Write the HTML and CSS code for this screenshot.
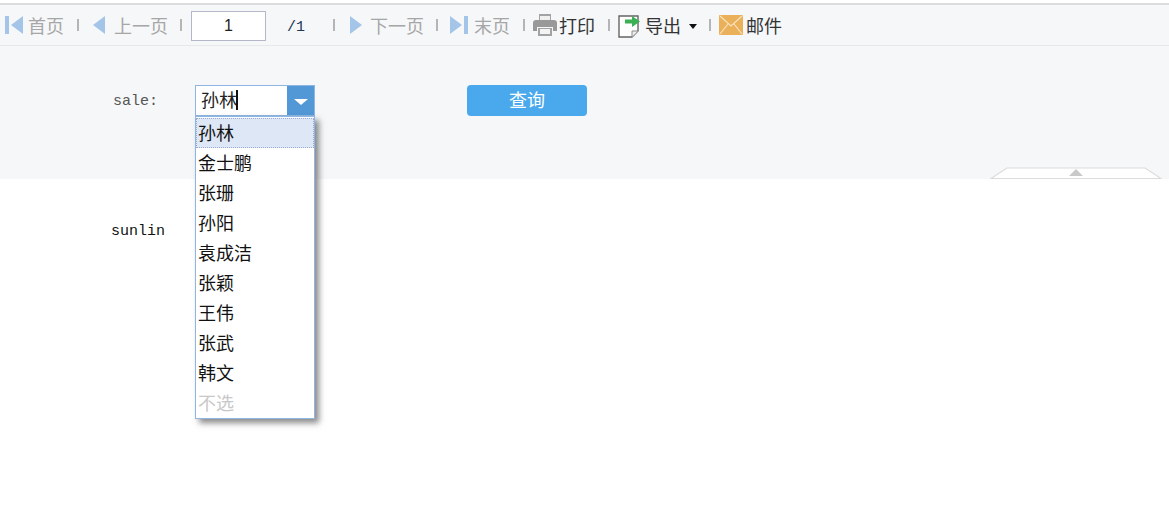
FILE: index.html
```html
<!DOCTYPE html>
<html lang="en">
<head>
  <meta charset="UTF-8">
  <title>Report</title>
  <link rel="stylesheet" href="styles.css">
</head>
<body>
  <div class="toolbar">
    <span class="tool first-page">
      <svg class="icon" width="18" height="20" viewBox="0 0 18 20"><rect x="0" y="1" width="4" height="18" fill="#a4c5e8"/><path d="M18 1V19L6 10Z" fill="#a4c5e8"/></svg>
      <span class="tool-text off">首页</span>
    </span>
    <i class="sep sep-first"></i>
    <span class="tool prev-page">
      <svg class="icon" width="12" height="18" viewBox="0 0 12 18"><path d="M12 0V18L0 9Z" fill="#a4c5e8"/></svg>
      <span class="tool-text off">上一页</span>
    </span>
    <i class="sep sep-prev"></i>
    <input class="page-input" type="text" value="1">
    <span class="page-total">/1</span>
    <i class="sep sep-total"></i>
    <span class="tool next-page">
      <svg class="icon" width="12" height="18" viewBox="0 0 12 18"><path d="M0 0V18L12 9Z" fill="#a4c5e8"/></svg>
      <span class="tool-text off">下一页</span>
    </span>
    <i class="sep sep-next"></i>
    <span class="tool last-page">
      <svg class="icon" width="18" height="20" viewBox="0 0 18 20"><path d="M0 1V19L12 10Z" fill="#a4c5e8"/><rect x="14" y="1" width="4" height="18" fill="#a4c5e8"/></svg>
      <span class="tool-text off">末页</span>
    </span>
    <i class="sep sep-last"></i>
    <span class="tool print">
      <svg class="icon" width="24" height="22" viewBox="0 0 24 22"><path d="M6 0H18V6H6Z" fill="#a3a3a3"/><path d="M3 6H21Q24 6 24 9V17H20V13H4V17H0V9Q0 6 3 6Z" fill="#999"/><path d="M5 14H19V22H5Z" fill="#a3a3a3"/><path d="M7 2H17V6H7Z" fill="#f0f0f0"/><path d="M7 15H17V20H7Z" fill="#f4f4f4"/></svg>
      <span class="tool-text">打印</span>
    </span>
    <i class="sep sep-print"></i>
    <span class="tool export">
      <svg class="icon" width="23" height="25" viewBox="0 0 23 25"><path d="M1 3H20V18L14 24H1Z" fill="#fff" stroke="#666" stroke-width="1.4"/><path d="M14 24V18H20" fill="#eee" stroke="#888"/><path d="M7 6.5H14V3L22 8.5L14 14V10.5H7Z" fill="#3cb054"/></svg>
      <span class="tool-text">导出</span>
      <i class="caret"></i>
    </span>
    <i class="sep sep-export"></i>
    <span class="tool mail">
      <svg class="icon" width="24" height="20" viewBox="0 0 24 20"><rect width="24" height="20" rx="1" fill="#eab05a"/><path d="M1 1L12 11L23 1M1 19L9 9M23 19L15 9" fill="none" stroke="#f8e3bd" stroke-width="1.2"/></svg>
      <span class="tool-text">邮件</span>
    </span>
  </div>

  <div class="form-panel">
    <span class="field-label">sale:</span>
    <div class="combo">
      <div class="combo-value">孙林<i class="text-cursor"></i></div>
      <div class="combo-btn"><i class="combo-arrow"></i></div>
      <ul class="combo-list">
        <li class="selected">孙林</li>
        <li>金士鹏</li>
        <li>张珊</li>
        <li>孙阳</li>
        <li>袁成洁</li>
        <li>张颖</li>
        <li>王伟</li>
        <li>张武</li>
        <li>韩文</li>
        <li class="none">不选</li>
      </ul>
    </div>
    <button class="query-btn">查询</button>
    <div class="collapse-handle">
      <svg width="172" height="12" viewBox="0 0 172 12"><path d="M1 11.5L17 1H155L171 11.5Z" fill="#fff" stroke="#dcdcdc" stroke-width="1.2"/><path d="M79 9L86 2L93 9Z" fill="#c9c9c9"/></svg>
    </div>
  </div>

  <div class="result">sunlin</div>
</body>
</html>
```

FILE: styles.css
```css
body {
  margin: 0;
  min-height: 100vh;
  background: white;
  font-family: "Noto Sans CJK SC", "Liberation Sans", sans-serif;
  color: #222;
}
.toolbar {
  display: flex;
  align-items: center;
  height: 40px;
  margin-top: 3px;
  border-top: 2px solid #dcdcdc;
  border-bottom: 1px solid #e6e8ea;
  background: #f6f7f9;
  padding-left: 5px;
  font-size: 18px;
}
.tool {
  display: flex;
  align-items: center;
}
.icon {
  flex: none;
}
.tool-text {
  line-height: 24px;
  color: #333;
}
.tool-text.off {
  color: #a6a6a6;
}
.sep {
  width: 2px;
  height: 12px;
  background: #b5b5b5;
  flex: none;
}

/* widths worked out per item so the row lines up */
.first-page .icon { margin-right: 5px; }
.sep-first { margin: 0 14px 0 13px; }
.prev-page .icon { margin-right: 9px; }
.sep-prev { margin: 0 9px 0 12px; }
.page-input {
  width: 75px;
  height: 30px;
  box-sizing: border-box;
  margin-top: 2px;
  border: 1px solid #b3b7c9;
  padding: 0;
  text-align: center;
  font-family: "Liberation Sans", sans-serif;
  font-size: 16px;
  color: #222;
  background: white;
}
.page-total {
  margin-left: 21px;
  margin-top: 5px;
  width: 46px;
  font-family: "Liberation Mono", monospace;
  font-size: 15px;
  color: #235;
}
.sep-total { margin-right: 15px; }
.next-page .icon { margin-right: 8px; }
.sep-next { margin: 0 12px 0 12px; }
.last-page .icon { margin-right: 6px; }
.sep-last { margin: 0 8px 0 13px; }
.print .icon { margin-right: 2px; }
.sep-print { margin: 0 8px 0 13px; }
.export .icon { margin-right: 4px; }
.caret {
  width: 0;
  height: 0;
  margin-left: 8px;
  margin-top: 2px;
  border-style: solid;
  border-width: 5px 4.5px 0;
  border-color: #111 transparent transparent;
}
.sep-export { margin: 0 8px 0 12px; }
.mail .icon { margin-right: 3px; }

.form-panel {
  position: relative;
  display: flex;
  align-items: flex-start;
  height: 133px;
  background: #f6f7f9;
}
.field-label {
  margin: 47px 0 0 113px;
  width: 82px;
  font-family: "Liberation Mono", monospace;
  font-size: 15px;
  line-height: 17px;
  color: #555;
}
.combo {
  position: relative;
  display: flex;
  margin-top: 39px;
  width: 120px;
  height: 31px;
  box-sizing: border-box;
  border: 1px solid #8fb6e2;
  background: white;
}
.combo-value {
  flex: 1;
  padding: 0 0 2px 5px;
  font-size: 18px;
  line-height: 27px;
  color: #222;
  display: flex;
  align-items: center;
}
.text-cursor {
  width: 2px;
  height: 20px;
  margin-left: -1px;
  background: #111;
}
.combo-btn {
  width: 27px;
  display: flex;
  align-items: center;
  justify-content: center;
  background: #5298d6;
}
.combo-arrow {
  width: 0;
  height: 0;
  margin-top: 3px;
  border-style: solid;
  border-width: 6px 7px 0;
  border-color: white transparent transparent;
}
.combo-list {
  position: absolute;
  z-index: 5;
  top: 30px;
  left: -1px;
  width: 120px;
  height: 303px;
  box-sizing: border-box;
  margin: 0;
  padding: 1px 0 0;
  list-style: none;
  background: white;
  border: 1px solid #8fb6e2;
  box-shadow: 4px 4px 6px rgba(60, 60, 60, 0.6);
  font-size: 18px;
}
.combo-list li {
  height: 30px;
  line-height: 28px;
  padding-left: 2px;
  color: #111;
}
.combo-list li.selected {
  box-sizing: border-box;
  line-height: 26px;
  background: #dee7f6;
  border: 1px dotted #9aaad0;
  padding-left: 1px;
}
.combo-list li.none {
  color: #c8c8c8;
}
.query-btn {
  margin: 39px 0 0 152px;
  width: 120px;
  height: 31px;
  border: none;
  border-radius: 4px;
  background: #4aa9ec;
  color: white;
  font-family: inherit;
  font-size: 18px;
  padding: 0 0 3px 0;
}
.collapse-handle {
  position: absolute;
  right: 7px;
  bottom: 0;
  height: 12px;
}
.collapse-handle svg {
  display: block;
}
.result {
  margin: 43px 0 0 111px;
  font-family: "Liberation Mono", monospace;
  font-size: 15px;
  line-height: 20px;
  color: #111;
}
```
